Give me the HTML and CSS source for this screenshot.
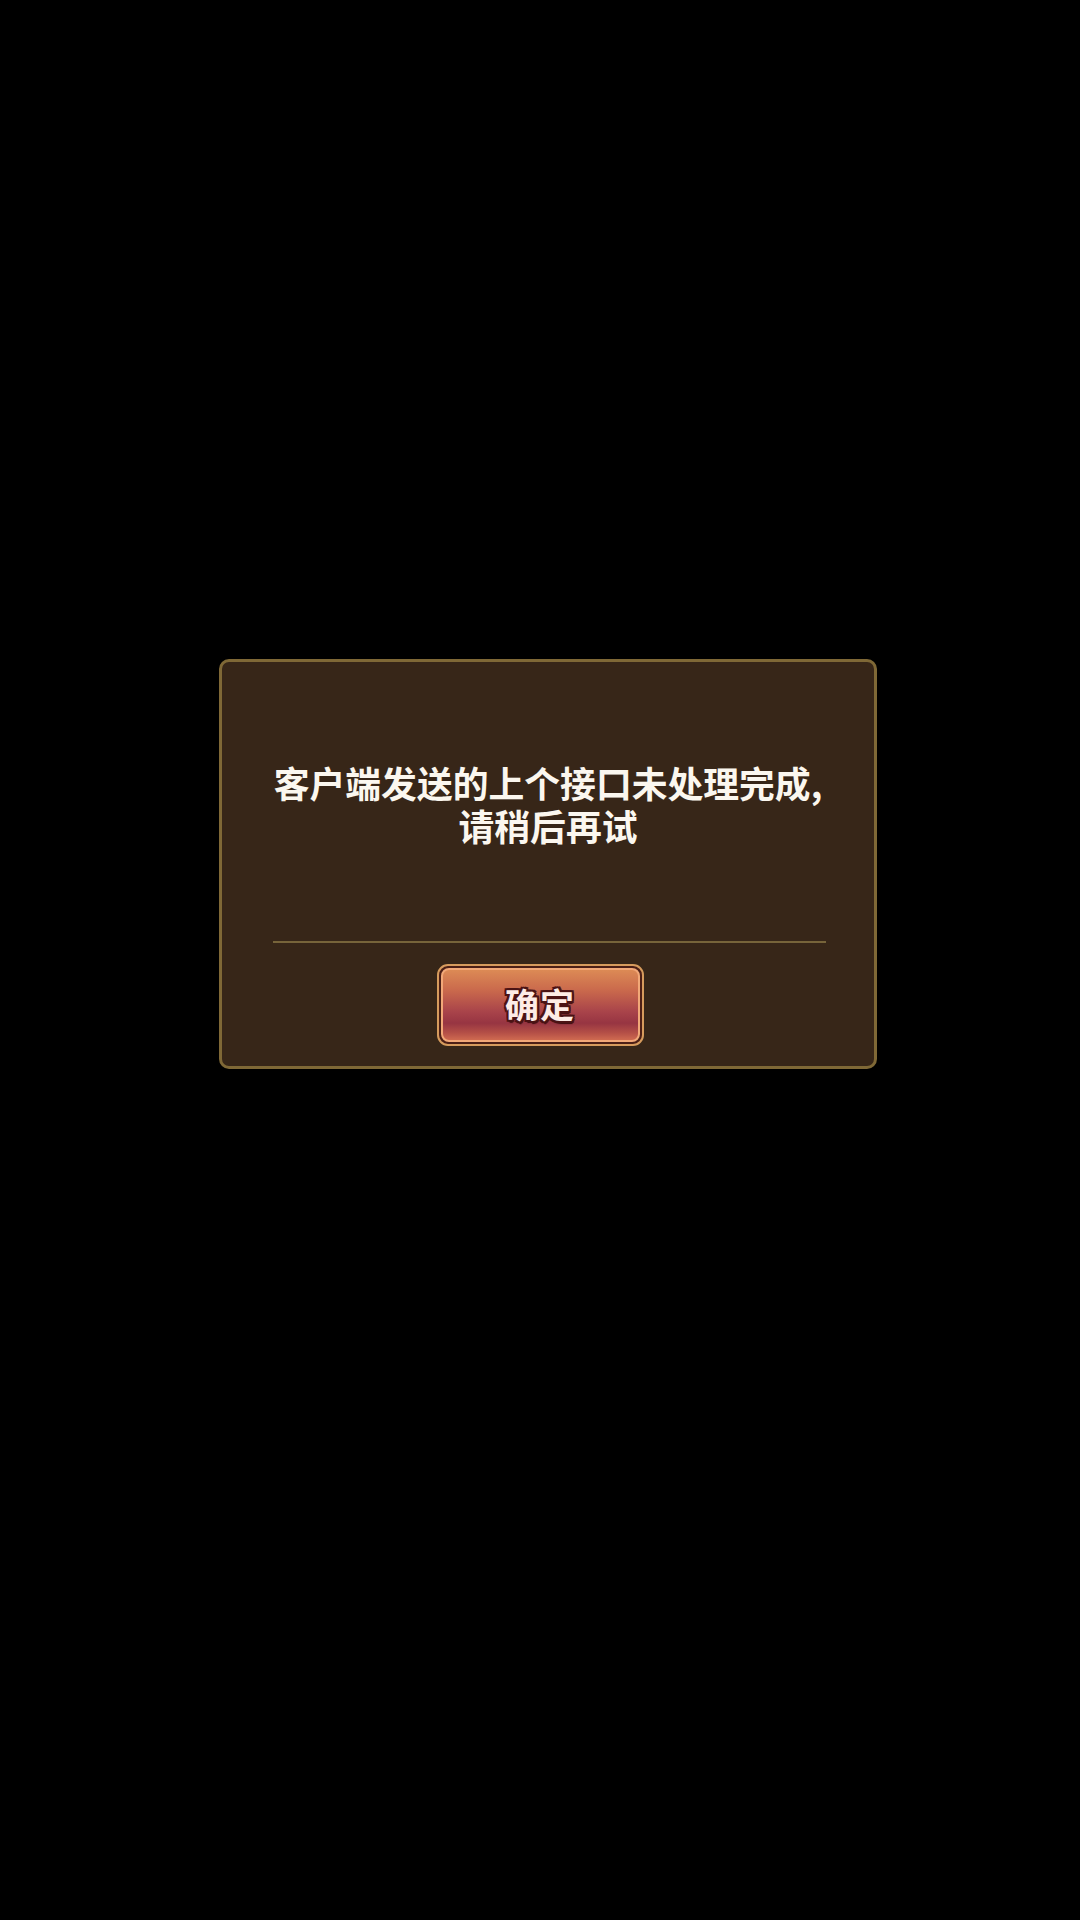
FILE: index.html
```html
<!DOCTYPE html>
<html lang="zh-CN">
<head>
<meta charset="utf-8">
<title>提示</title>
<link rel="stylesheet" href="styles.css">
</head>
<body>
<div class="screen">
  <div class="dialog">
    <div class="message">
      <div class="line">客户端发送的上个接口未处理完成,</div>
      <div class="line">请稍后再试</div>
    </div>
    <div class="divider"></div>
    <div class="actions">
      <button class="btn"><span class="btn-inner">确定</span></button>
    </div>
  </div>
</div>
</body>
</html>
```

FILE: styles.css
```css
html, body {
  margin: 0;
  padding: 0;
  background: #000;
}
body {
  width: 1080px;
  height: 1920px;
  font-family: "Noto Sans CJK SC", "Noto Sans", sans-serif;
}
.screen {
  padding-top: 659px;
  padding-left: 219px;
}
.dialog {
  box-sizing: border-box;
  width: 658px;
  height: 410px;
  background: #372618;
  border: 3px solid #7f6836;
  border-radius: 10px;
  display: flex;
  flex-direction: column;
  align-items: center;
  padding-top: 99px;
}
.message {
  color: #fbf7ef;
  font-size: 35.8px;
  font-weight: 700;
  text-align: center;
  height: 180px;
  display: flex;
  flex-direction: column;
  align-items: center;
}
.line {
  height: 43px;
  line-height: 43px;
  white-space: nowrap;
}
.divider {
  width: 553px;
  height: 2px;
  background: #77643a;
  margin-left: 3px;
}
.actions {
  width: 100%;
  display: flex;
  justify-content: center;
  padding-top: 21px;
  padding-right: 16px;
  box-sizing: border-box;
}
.btn {
  box-sizing: border-box;
  width: 207px;
  height: 82px;
  padding: 2px;
  border: 2px solid #d69b5d;
  border-radius: 11px;
  background: #4c1f16;
  cursor: pointer;
  font: inherit;
  display: flex;
}
.btn-inner {
  flex: 1;
  box-sizing: border-box;
  border: 2px solid #f2a878;
  border-radius: 8px;
  background: linear-gradient(to bottom, #dc8a55 0%, #c9684c 30%, #a8434a 60%, #973542 76%, #b55047 90%, #cf6a50 100%);
  display: flex;
  align-items: center;
  justify-content: center;
  padding-bottom: 4px;
  color: #fdece6;
  font-size: 34px;
  font-weight: 700;
  letter-spacing: 1px;
  text-shadow:
    2px 0 0 #4b1314, -2px 0 0 #4b1314, 0 2px 0 #4b1314, 0 -2px 0 #4b1314,
    2px 2px 0 #4b1314, -2px 2px 0 #4b1314, 2px -2px 0 #4b1314, -2px -2px 0 #4b1314,
    1px 3px 1px #3a0c0e;
}
```
